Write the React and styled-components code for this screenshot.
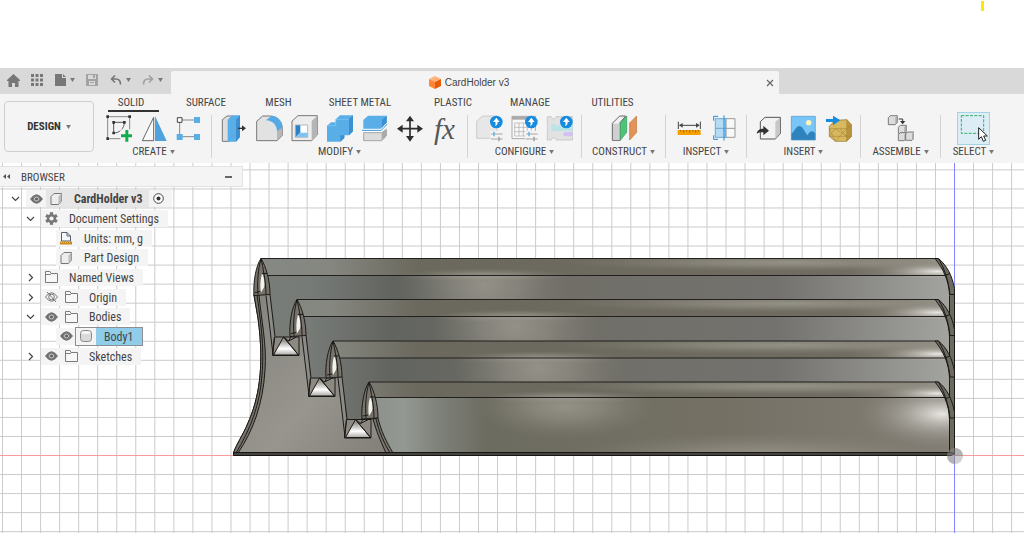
import React from "react";
import styled, { createGlobalStyle } from "styled-components";

const GlobalStyle = createGlobalStyle`
  * {
    box-sizing: border-box;
  }
  body {
    margin: 0;
    background: #fff;
    color: #444;
    font-family: "Roboto Condensed", Roboto, sans-serif;
    font-size: 11px;
  }
  button {
    border: 0;
    padding: 0;
    background: none;
    color: inherit;
    font: inherit;
  }
  svg {
    display: block;
  }
`;

//layout

const Page = styled.div`
  min-height: 100vh;
  display: flex;
  flex-direction: column;
`;

const TopSpace = styled.div`
  height: 68px;
  display: flex;
  justify-content: flex-end;
  padding: 1px 40px 0 0;
`;

const Mark = styled.div`
  width: 3px;
  height: 10px;
  background: #ffe900;
`;

const TitleBar = styled.header`
  height: 26px;
  display: flex;
  align-items: flex-end;
  background: #d9d9d9;
`;

const QuickAccess = styled.div`
  width: 171px;
  height: 26px;
  display: flex;
  align-items: flex-start;
`;

const QuickButton = styled.button`
  width: ${(props) => props.$width}px;
  height: 24px;
  display: flex;
  align-items: center;
  justify-content: center;
  gap: 4px;
  color: ${(props) => (props.$faded ? "#a2a2a2" : "#777")};
`;

const FileTab = styled.div`
  flex: 0 1 608px;
  height: 23px;
  display: flex;
  align-items: center;
  border-radius: 3px 3px 0 0;
  background: #f4f4f4;
`;

const FileName = styled.span`
  flex: 1;
  display: flex;
  align-items: center;
  justify-content: center;
  gap: 4px;
  padding-left: 6px;
  font-family: "Liberation Sans", sans-serif;
  font-size: 10px;
`;

const CloseButton = styled.button`
  width: 18px;
  height: 18px;
  display: flex;
  align-items: center;
  justify-content: center;
`;

const Ribbon = styled.div`
  height: 69px;
  display: flex;
  background: #f4f4f4;
`;

const DesignButton = styled.button`
  width: 90px;
  height: 51px;
  margin: 7px 2px 0 4px;
  display: flex;
  align-items: center;
  justify-content: center;
  gap: 5px;
  border: 1px solid #cfcfcf;
  border-radius: 4px;
  color: #333;
  font-weight: bold;
`;

const RibbonMain = styled.div`
  flex: 1;
`;

const TabList = styled.nav`
  height: 21px;
  display: flex;
  padding-left: 12px;
`;

const TabButton = styled.button`
  width: ${(props) => props.$width}px;
  height: 18px;
  padding: 1px ${(props) => (props.$active ? 5 : 0)}px 0 0;
  border-bottom: 2px solid ${(props) => (props.$active ? "#333" : "transparent")};
  line-height: 15px;
  white-space: nowrap;
`;

const Groups = styled.div`
  display: flex;
`;

const Group = styled.section`
  width: ${(props) => props.$width}px;
  height: 43px;
  border-right: ${(props) => (props.$last ? "0" : "1px solid #d3d3d3")};
  display: flex;
  flex-direction: column;
  align-items: center;
`;

const Tools = styled.div`
  height: 27px;
  display: flex;
  align-items: center;
  gap: 8px;
`;

const ToolButton = styled.button`
  width: 27px;
  height: 27px;
`;

const SelectButton = styled.button`
  width: 33px;
  height: 33px;
  border: 1px solid #a5d3e6;
  background: #dcedf5;
`;

const FxLabel = styled.span`
  display: block;
  color: #555;
  font-family: "Liberation Serif", serif;
  font-size: 29px;
  font-style: italic;
  line-height: 24px;
`;

const GroupLabel = styled.button`
  height: 16px;
  margin-top: 3px;
  display: flex;
  align-items: center;
  gap: 3px;
  white-space: nowrap;
`;

const Workspace = styled.main`
  position: relative;
  flex: 1;
  min-height: 370px;
  display: flex;
  flex-direction: column;
`;

const Canvas = styled.svg`
  flex: 1;
  width: 100%;
  min-height: 370px;
`;

const BrowserPanel = styled.aside`
  position: absolute;
  left: 0;
  top: 3px;
  width: 243px;
`;

const BrowserHeader = styled.div`
  height: 21px;
  display: flex;
  align-items: center;
  padding: 0 10px 0 3px;
  border: 1px solid #e2e2e2;
  border-left: 0;
  background: #f4f4f4;
`;

const BrowserTitle = styled.span`
  flex: 1;
  padding: 1px 0 0 11px;
`;

const Tree = styled.div`
  height: 177px;
  margin-top: 2px;
  display: grid;
  grid-template-rows: repeat(9, 1fr);
`;

const TreeRow = styled.div`
  display: flex;
  align-items: center;
  padding-left: ${(props) => 5 + props.$level * 15}px;
`;

const ChevronButton = styled.button`
  width: 21px;
  height: 17px;
  display: flex;
  align-items: center;
  justify-content: center;
`;

const Pill = styled.div`
  height: 17px;
  display: flex;
  align-items: center;
  padding-right: ${(props) => (props.$selected ? 0 : 3)}px;
  background: #f4f4f4;
`;

const Slot = styled.span`
  width: 20px;
  height: 17px;
  display: flex;
  align-items: center;
  justify-content: center;
`;

const Item = styled.button`
  height: 17px;
  display: flex;
  align-items: center;
  font-weight: ${(props) => (props.$bold ? "bold" : "normal")};
  background: ${(props) => (props.$bold ? "#e6e6e6" : "none")};
  outline: ${(props) => (props.$selected ? "1px solid #8b8f92" : "0")};
`;

const ItemText = styled.span`
  height: 17px;
  line-height: 18px;
  padding: 0 ${(props) => (props.$selected ? 9 : 6)}px 0 8px;
  font-size: 12px;
  white-space: nowrap;
  background: ${(props) => (props.$selected ? "#8fcdea" : "none")};
`;

//small icons

const Caret = ({ size = 5 }) => (
  <svg width={size} height={size - 1} viewBox="0 0 6 5">
    <path d="M0 0h6L3 5z" fill="#777" />
  </svg>
);

const Home = () => (
  <svg width="13" height="13" viewBox="0 0 13 13">
    <path d="M6.500 0L13 6v1h-1.500v6H8V9H5v4H1.500V7H0V6z" fill="currentColor" />
  </svg>
);

const Apps = () => (
  <svg width="12" height="12" viewBox="0 0 12 12" fill="currentColor">
    {[0, 1, 2].map((x) =>
      [0, 1, 2].map((y) => (
        <rect key={`${x}${y}`} x={x * 4.5} y={y * 4.5} width="3" height="3" />
      ))
    )}
  </svg>
);

const FileIcon = () => (
  <svg width="11" height="12" viewBox="0 0 11 12">
    <path d="M0 0h7v4h4v8H0zM8 0l3 3H8z" fill="currentColor" />
  </svg>
);

const Save = () => (
  <svg width="12" height="12" viewBox="0 0 12 12">
    <path
      d="M0 0h12v12H0zM2 1v4h8V1zM3 7v4h6V7z"
      fill="currentColor"
      fillRule="evenodd"
    />
    <path d="M7 1h2v3H7zM4 8h4v1H4z" fill="currentColor" />
  </svg>
);

const Undo = ({ flip }) => (
  <svg width="12" height="10" viewBox="0 0 12 10">
    <g
      transform={flip ? "translate(12 0) scale(-1 1)" : undefined}
      fill="none"
      stroke="currentColor"
      strokeWidth="1.600"
    >
      <path d="M5 .500L1.500 4 5 7.500M1.500 4H6c3 0 4.500 1.500 4.500 5.500" />
    </g>
  </svg>
);

const Cube = () => (
  <svg width="12" height="13" viewBox="0 0 12 13">
    <path d="M6 0l6 3-6 3-6-3z" fill="#ffb27a" />
    <path d="M0 3l6 3v7l-6-3z" fill="#ff8433" />
    <path d="M12 3L6 6v7l6-3z" fill="#e65c0a" />
  </svg>
);

const Close = () => (
  <svg width="8" height="8" viewBox="0 0 8 8">
    <path d="M1 1l6 6M7 1L1 7" stroke="#666" strokeWidth="1.200" />
  </svg>
);

const Chevron = ({ open }) => (
  <svg width="9" height="9" viewBox="0 0 9 9" fill="none" stroke="#444" strokeWidth="1.200">
    <path d={open ? "M1 3l3.500 3.500L8 3" : "M3 1l3.500 3.500L3 8"} />
  </svg>
);

const Eye = ({ hidden }) => (
  <svg width="13" height="10" viewBox="0 0 13 10">
    <path
      d="M.500 5Q6.500-3.500 12.500 5 6.500 13.500.500 5z"
      fill={hidden ? "none" : "#6b6b6b"}
      stroke="#777"
    />
    <circle cx="6.500" cy="5" r="2.800" fill={hidden ? "none" : "#eee"} stroke="#777" />
    {hidden ? (
      <path d="M2 0l9 10" stroke="#777" />
    ) : (
      <circle cx="6.500" cy="5" r="1.700" fill="#666" />
    )}
  </svg>
);

const Folder = () => (
  <svg width="13" height="12" viewBox="0 0 13 12">
    <path d="M.500 11.500V.500h4.500l1 2h6.500v9zM.500 3.500h5l1-1" fill="#f7f7f7" stroke="#7b7b7b" />
  </svg>
);

const Box = () => (
  <svg width="12" height="12" viewBox="0 0 12 12">
    <path d="M1 3.500L4 .500h7.500V8l-3 3.500H1z" fill="#ececec" stroke="#777" />
    <path d="M8.500 3.500l3-3V8l-3 3.500z" fill="#bcbcbc" />
  </svg>
);

const Cylinder = () => (
  <svg width="12" height="12" viewBox="0 0 12 12">
    <rect x=".500" y=".500" width="11" height="11" rx="3" fill="#dadada" stroke="#888" />
    <ellipse cx="6" cy="2.500" rx="4.500" ry="1.500" fill="#f6f6f6" />
  </svg>
);

const Gear = () => (
  <svg width="13" height="13" viewBox="-6.500 -6.500 13 13">
    {[0, 60, 120].map((a) => (
      <rect
        key={a}
        x="-1.600"
        y="-6.300"
        width="3.200"
        height="12.600"
        fill="#777"
        transform={`rotate(${a})`}
      />
    ))}
    <circle r="4.600" fill="#777" />
    <circle r="2.100" fill="#f4f4f4" />
  </svg>
);

const Units = () => (
  <svg width="12" height="13" viewBox="0 0 12 13">
    <path d="M1.500 9V.500H7L10.500 4v5z" fill="#f5f7fb" stroke="#56606e" />
    <path d="M7 .500V4h3.500" fill="none" stroke="#56606e" />
    <rect y="9.500" width="12" height="3" fill="#c98a17" />
    <path d="M1 10.500h10" stroke="#f0bd4d" strokeDasharray="1 1" />
  </svg>
);

const Target = () => (
  <svg width="11" height="11" viewBox="0 0 11 11">
    <circle cx="5.500" cy="5.500" r="4.800" fill="#fff" stroke="#444" />
    <circle cx="5.500" cy="5.500" r="2" fill="#333" />
  </svg>
);

//toolbar icons, each on an 81 unit square

const ToolSvg = styled.svg`
  width: 27px;
  height: 27px;
`;

const CreateSketch = () => (
  <ToolSvg viewBox="315 153 81 81">
    <path d="M323 158h66v66h-66z" fill="none" stroke="#888" strokeWidth="3" />
    <path d="M341 175h32c0 18-14 32-32 32z" fill="none" stroke="#555" strokeWidth="3" />
    <path
      d="M319 154h8v8h-8zM385 154h8v8h-8zM319 220h8v8h-8zM337 171h8v8h-8zM369 171h8v8h-8zM337 203h8v8h-8z"
      fill="#333"
    />
    <path d="M361 196h35v38h-35z" fill="#f4f4f4" />
    <path d="M376 198h9v13h11v9h-11v13h-9v-13h-13v-9h13z" fill="#14ad4d" />
  </ToolSvg>
);

const Mirror = () => (
  <ToolSvg viewBox="420 153 81 81">
    <path d="M461 160v70h-34z" fill="#fafafa" stroke="#666" strokeWidth="3" />
    <path d="M465 156v75h35z" fill="#4fa3dd" />
  </ToolSvg>
);

const Pattern = () => (
  <ToolSvg viewBox="525 153 81 81">
    <path d="M539 168h52M539 168v50h52" fill="none" stroke="#888" strokeWidth="3" />
    <path d="M532 161h14v14h-14z" fill="#fff" stroke="#444" strokeWidth="3" />
    <path d="M582 159h18v18h-18zM530 210h18v18h-18zM582 210h18v18h-18z" fill="#5aaee8" />
  </ToolSvg>
);

const PressPull = () => (
  <ToolSvg viewBox="33 60 81 81">
    <path d="M37 74l14-11h18v65l-12 11H37z" fill="#dedede" stroke="#777" strokeWidth="3" />
    <path d="M53 74l14-13h23v65l-12 14H53z" fill="#5aaee8" />
    <path d="M78 74l12-13v65l-12 14z" fill="#3d8fcf" />
    <path d="M84 100h18" stroke="#333" strokeWidth="4" />
    <path d="M96 91l12 9-12 9z" fill="#333" />
  </ToolSvg>
);

const Fillet = () => (
  <ToolSvg viewBox="138 60 81 81">
    <path
      d="M140 137V79l18-16h21c22 0 38 15 38 39v20l-16 15z"
      fill="#e2e2e2"
      stroke="#777"
      strokeWidth="3"
    />
    <path d="M201 108l16-13v27l-16 15z" fill="#b7b7b7" />
    <path d="M168 76l17-14c20 2 31 16 32 36l-16 11c0-18-13-33-33-33z" fill="#55a9e4" />
  </ToolSvg>
);

const Shell = () => (
  <ToolSvg viewBox="243 60 81 81">
    <path d="M246 78l18-16h58v58l-17 17h-59z" fill="#ededed" stroke="#777" strokeWidth="3" />
    <path d="M305 78l17-16v58l-17 17z" fill="#b5b5b5" />
    <path d="M256 90h37v37h-37z" fill="#fff" stroke="#999" strokeWidth="2" />
    <path d="M257 91h14v22l-14 13z" fill="#2c82c4" />
    <path d="M271 113h22v13h-36z" fill="#7cc2f3" />
  </ToolSvg>
);

const Combine = () => (
  <ToolSvg viewBox="348 60 81 81">
    <path d="M351 92l12-10h14V73l13-12h39v48l-12 12h-14v8l-12 11h-40z" fill="#5aaee8" />
    <path d="M417 73l12-12v48l-12 12zM391 129v-8h12v8l-12 11z" fill="#3d8fcf" />
    <path d="M351 92h26V73h40" fill="none" stroke="#8bcaf4" strokeWidth="2" />
  </ToolSvg>
);

const Split = () => (
  <ToolSvg viewBox="453 60 81 81">
    <path d="M460 75l14-13h56v25l-14 14h-56z" fill="#5aaee8" />
    <path d="M516 75l14-13v25l-14 14z" fill="#3d8fcf" />
    <path d="M461 113h54l14-10v20l-14 14h-54z" fill="#dcdcdc" stroke="#888" strokeWidth="2" />
    <path d="M515 113l14-10v20l-14 14z" fill="#aaa" />
    <path d="M456 106h58l18-19" fill="none" stroke="#fff" strokeWidth="8" />
    <path d="M456 106h58l18-19" fill="none" stroke="#3094dc" strokeWidth="3" />
  </ToolSvg>
);

const Move = () => (
  <ToolSvg viewBox="558 60 81 81">
    <path d="M600 70v62M569 101h62" stroke="#2e2e2e" strokeWidth="5" />
    <path
      d="M600 62l12 17h-24zM600 140l12-17h-24zM561 101l17-12v24zM639 101l-17-12v24z"
      fill="#2e2e2e"
    />
  </ToolSvg>
);

const UploadBadge = ({ x }) => (
  <g transform={`translate(${x} 81)`}>
    <circle r="19" fill="#168ce0" />
    <path d="M0-13L10 0H4c0 8-3 11-8 12 3-5 2-8 1-12h-7z" fill="#fff" />
  </g>
);

const Sliders = ({ x }) => (
  <g transform={`translate(${x} 0)`}>
    <path d="M-2 108h42v33H-2z" fill="#f4f4f4" />
    <path d="M0 117h35M0 132h35" stroke="#a5a5a5" strokeWidth="3" />
    <path d="M9 110v14" stroke="#58aee9" strokeWidth="4" />
    <path d="M24 125v14" stroke="#999" strokeWidth="4" />
  </g>
);

const ConfigureModel = () => (
  <ToolSvg viewBox="33 60 81 81">
    <path d="M35 130V79l17-16h44v67z" fill="#e7e7e7" stroke="#bbb" strokeWidth="2" />
    <Sliders x={78} />
    <UploadBadge x={94} />
  </ToolSvg>
);

const ConfigureTable = () => (
  <ToolSvg viewBox="138 60 81 81">
    <path d="M141 64h70v67h-70z" fill="#f8f8f8" stroke="#aaa" strokeWidth="3" />
    <path d="M141 64h70v10h-70z" fill="#aaa" />
    <path
      d="M149 84h50v39h-50zM149 97h50M149 110h50M162 84v39M175 84v39M187 84v39"
      fill="none"
      stroke="#aaa"
      strokeWidth="2"
    />
    <Sliders x={183} />
    <UploadBadge x={199} />
  </ToolSvg>
);

const ConfigureRules = () => (
  <ToolSvg viewBox="243 60 81 81">
    <path
      d="M247 65h12c0 9 14 9 14 0h50v70h-50c0-8-14-8-14 0h-12z"
      fill="#e2e2e2"
      stroke="#bbb"
      strokeWidth="2"
    />
    <path d="M259 88h12c2 7 10 7 12 0h40v20h-64z" fill="#b9e5e8" />
    <rect x="295" y="111" width="28" height="13" rx="6" fill="#d3c1f1" />
    <UploadBadge x={304} />
  </ToolSvg>
);

const Construct = () => (
  <ToolSvg viewBox="435 60 81 81">
    <path d="M442 85l22-22h18l-17 20v53h-23z" fill="#f1f1f1" stroke="#666" strokeWidth="3" />
    <path d="M444 86h20v49h-20z" fill="#cfcfcf" />
    <path d="M466 84l19-21v49l-19 24z" fill="#4cc577" stroke="#35905a" strokeWidth="2" />
    <path d="M494 84l21-21v49l-21 23z" fill="#e3935a" stroke="#bd7038" strokeWidth="2" />
  </ToolSvg>
);

const Measure = () => (
  <ToolSvg viewBox="630 60 81 81">
    <path d="M640 80v22M706 80v22M644 91h58" stroke="#444" strokeWidth="3" />
    <path d="M642 91l11-7v14zM704 91l-11-7v14z" fill="#444" />
    <path d="M638 105h69v15h-69z" fill="#f6a000" />
    <path
      d="M647 105v5M656 105v8M665 105v5M674 105v8M683 105v5M692 105v8M700 105v5"
      stroke="#775006"
      strokeWidth="2"
    />
  </ToolSvg>
);

const Section = () => (
  <ToolSvg viewBox="735 60 81 81">
    <path d="M783 71h27v56h-27zM783 100h27" fill="#f8f8f8" stroke="#999" strokeWidth="3" />
    <path d="M751 71h31v56h-31z" fill="#b6dbf4" stroke="#68a9d6" strokeWidth="3" />
    <path d="M751 100h31" stroke="#68a9d6" strokeWidth="3" />
    <path
      d="M746 77V64h13M746 121v12h13M777 61v76"
      fill="none"
      stroke="#168ce0"
      strokeWidth="3"
    />
  </ToolSvg>
);

const InsertDerive = () => (
  <ToolSvg viewBox="75 165 81 81">
    <path d="M91 185l14-13h46v49l-15 16H91z" fill="#f2f2f2" stroke="#555" strokeWidth="3" />
    <path d="M136 185l14-12v48l-14 15z" fill="#c7c7c7" />
    <path d="M80 221c2-11 9-15 20-15v-9l17 15-17 14v-9c-9 0-15 1-20 4z" fill="#333" />
  </ToolSvg>
);

const InsertImage = () => (
  <ToolSvg viewBox="180 165 81 81">
    <path d="M184 169h72v71h-72z" fill="#79c5f7" />
    <path
      d="M184 222c12-11 15-24 24-24s15 15 24 28c6-12 18-18 24-4v18h-72z"
      fill="#2e83bd"
    />
    <circle cx="236" cy="188" r="8" fill="#fff4bb" />
    <path d="M184 169h72v71h-72z" fill="none" stroke="#4796cc" strokeWidth="2" />
  </ToolSvg>
);

const InsertMesh = () => (
  <ToolSvg viewBox="285 165 81 81">
    <path
      d="M298 199l17-18 36-2 14 16v34l-15 15h-34l-18-15z"
      fill="#d9b95f"
      stroke="#8f7025"
      strokeWidth="2"
    />
    <path d="M351 179l14 16v34l-15 15z" fill="#b8943f" />
    <path
      d="M298 206h52v-27M350 206l15-11M298 206l18 38 34-38v38M298 229h52l-34-23-18 23M330 206l20 23 15 0"
      fill="none"
      stroke="#a07f30"
      strokeWidth="1.500"
    />
    <path d="M288 177h21v-10l22 14-22 15v-10h-21z" fill="#168ce0" />
  </ToolSvg>
);

const Assemble = () => (
  <ToolSvg viewBox="471 165 81 81">
    {[
      [475, 167, 27],
      [505, 196, 24],
      [505, 218, 24],
      [527, 216, 25],
    ].map(([x, y, s]) => (
      <g key={`${x}-${y}`} transform={`translate(${x} ${y})`}>
        <path
          d={`M0 6L6 0H${s}V${s - 6}L${s - 6} ${s}H0z`}
          fill="#dcdcdc"
          stroke="#666"
          strokeWidth="2.500"
        />
        <path d={`M${s - 6} 6L${s} 0V${s - 6}L${s - 6} ${s}z`} fill="#aaa" />
      </g>
    ))}
    <path d="M506 177h12v10" fill="none" stroke="#333" strokeWidth="3" />
    <path d="M510 183h16l-8 10z" fill="#333" />
  </ToolSvg>
);

const Select = () => (
  <svg width="31" height="31" viewBox="684 159 93 93">
    <path
      d="M694 167h67v53h-67z"
      fill="none"
      stroke="#32b067"
      strokeWidth="3"
      strokeDasharray="9 4"
    />
    <path
      d="M746 203v35l8-8 6 14 7-3-6-13h11z"
      fill="#fff"
      stroke="#222"
      strokeWidth="3"
    />
  </svg>
);

//model

const GRID = 19.04;
const ORIGIN = { x: 954.5, y: 455.5 };

// top of a rib, its crease, the bottom of its shaded side, and where it starts
const ribs = [
  { x: 261, top: 258.5, crease: 275.5, bottom: 337, shine: 485 },
  { x: 297, top: 299.5, crease: 316.5, bottom: 378, shine: 515 },
  { x: 333, top: 341, crease: 358, bottom: 419.5, shine: 538 },
  { x: 369, top: 382, crease: 397.5, bottom: 453, shine: 565 },
];

const Grid = () => {
  const columns = [];
  const rows = [];
  for (let i = -60; i < 30; i++) if (i) columns.push(ORIGIN.x + i * GRID);
  for (let i = -30; i < 30; i++) if (i) rows.push(ORIGIN.y + i * GRID);
  return (
    <g stroke="#cbcbcb">
      {columns.map((x) => (
        <path key={x} d={`M${x} -200V900`} />
      ))}
      {rows.map((y) => (
        <path key={y} d={`M-300 ${y}H1500`} />
      ))}
    </g>
  );
};

const Rib = ({ rib, last }) => {
  const { x, top, crease, bottom, shine } = rib;
  const side = last
    ? `M${x} ${top}H935C943 ${top + 10} 949 ${top + 22} 949 ${top + 37}V454H393Q380 438 ${x + 9} ${top + 36}Q${x + 7} ${top + 10} ${x} ${top}z`
    : `M${x} ${top}H935C943 ${top + 10} 949 ${top + 22} 949 ${top + 37}V${bottom + 8}H${x + 13}L${x + 9} ${top + 36}Q${x + 7} ${top + 12} ${x} ${top}z`;
  const clip = `rib-${x}`;
  return (
    <g>
      <clipPath id={clip}>
        <path d={side} />
      </clipPath>
      <g clipPath={`url(#${clip})`}>
        <rect x={x} y={top} width="700" height={bottom - top + 9} fill={last ? "url(#front)" : "url(#under)"} />
        <ellipse cx={shine} cy={crease + 9} rx={last ? 90 : 85} ry={last ? 32 : 70} fill="url(#glow)" />
        {last && <ellipse cx="942" cy="414" rx="85" ry="34" fill="url(#white)" />}
        {last && <ellipse cx="760" cy="458" rx="190" ry="26" fill="url(#glow)" />}
        <rect x={x} y={top} width="700" height={crease - top} fill="url(#crown)" />
        <ellipse cx={shine} cy={crease} rx="85" ry="7" fill="url(#glow)" />
        <ellipse cx="790" cy={top + 4} rx="230" ry="9" fill="url(#glow)" />
        <ellipse cx="937" cy={crease - 4} rx="60" ry="9" fill="url(#white)" />
      </g>
      <path d={`M${x} ${top}H938M${x + 6} ${crease}H946`} stroke="#22211f" />
    </g>
  );
};

const RibEnd = ({ top }) => (
  <g stroke="#1b1a18" fill="#6c695f">
    <path
      d={`M935 ${top}H938.500C947 ${top + 7} 952 ${top + 17} 954.500 ${top + 30}V454H949.500V${top + 37}C949 ${top + 22} 943 ${top + 10} 935 ${top}z`}
    />
    <path d={`M938.500 ${top}Q948 ${top + 16} 950 ${top + 36}M945 ${top + 17}l5-2M949 ${top + 36}h5`} fill="none" />
  </g>
);

const Tip = ({ rib, last }) => (
  <g transform={`translate(${rib.x} ${rib.top})`} stroke="#1b1a18" strokeWidth="1">
    <path d="M0 0C-5 7-8 24-7 37L9 36C9 22 5 8 0 0z" fill="#77736a" />
    <path d="M1 15C-1 22-1 29 0 34L3 29C4 24 3 18 1 15z" fill="#f2f2ee" stroke="none" />
    <path d="M0 0C-3 12-4 23-3 36M0 0C2 10 5 23 5 36M-6 34l5-1M1 15h5" fill="none" />
    {!last && <path d="M5 37L12 96M9 36L14 78" fill="none" />}
  </g>
);

const Foot = ({ x, y }) => (
  <g transform={`translate(${x} ${y})`} stroke="#1b1a18">
    <path d="M2 0H26.500V18.500H0z" fill="#8d8981" />
    <path d="M1 18L11 0 26 18z" fill="url(#footShine)" />
    <path d="M11 0L26 18M2 0L0 18M11 0l5 4 8-4M16 4l3-5" fill="none" />
  </g>
);

const Model = () => (
  <Canvas viewBox="0 163 1024 370" preserveAspectRatio="xMidYMid slice" role="img">
    <defs>
      <linearGradient id="face" x1="0" y1="0" x2="1" y2="1">
        <stop offset="0" stopColor="#7f7e7a" />
        <stop offset=".600" stopColor="#98958e" />
        <stop offset="1" stopColor="#817e78" />
      </linearGradient>
      <linearGradient id="under" gradientUnits="userSpaceOnUse" x1="261" y1="0" x2="950" y2="0">
        <stop offset="0" stopColor="#777d78" />
        <stop offset=".070" stopColor="#777b77" />
        <stop offset=".190" stopColor="#62645f" />
        <stop offset=".450" stopColor="#706e67" />
        <stop offset=".750" stopColor="#73726e" />
        <stop offset="1" stopColor="#a3a3a0" />
      </linearGradient>
      <linearGradient id="front" gradientUnits="userSpaceOnUse" x1="369" y1="0" x2="950" y2="0">
        <stop offset="0" stopColor="#8b908a" />
        <stop offset=".060" stopColor="#939992" />
        <stop offset=".120" stopColor="#7e8179" />
        <stop offset=".200" stopColor="#6d6c61" />
        <stop offset=".600" stopColor="#747064" />
        <stop offset="1" stopColor="#827e75" />
      </linearGradient>
      <linearGradient id="crown" gradientUnits="userSpaceOnUse" x1="261" y1="0" x2="950" y2="0">
        <stop offset="0" stopColor="#858984" />
        <stop offset=".100" stopColor="#858780" />
        <stop offset=".230" stopColor="#6b685d" />
        <stop offset=".850" stopColor="#706c61" />
        <stop offset="1" stopColor="#99958b" />
      </linearGradient>
      <radialGradient id="glow">
        <stop offset="0" stopColor="#9d9a91" stopOpacity=".800" />
        <stop offset=".400" stopColor="#98958b" stopOpacity=".550" />
        <stop offset="1" stopColor="#858278" stopOpacity="0" />
      </radialGradient>
      <radialGradient id="white">
        <stop offset="0" stopColor="#eeece8" stopOpacity=".950" />
        <stop offset=".500" stopColor="#b9b6b0" stopOpacity=".500" />
        <stop offset="1" stopColor="#8d8a82" stopOpacity="0" />
      </radialGradient>
      <linearGradient id="footShine" x1="0" y1="0" x2="0" y2="1">
        <stop offset=".200" stopColor="#98958f" />
        <stop offset=".650" stopColor="#fff" />
        <stop offset="1" stopColor="#aaa8a2" />
      </linearGradient>
    </defs>
    <Grid />
    <path d="M-300 455.500H1500" stroke="#f79a9a" />
    <path d="M954.500 -200V900" stroke="#8585ff" />
    <path
      d="M254 295L258 318C265 370 258 400 248 423 243 435 236 445 233.500 453V455H393L378 418V382L261 260z"
      fill="url(#face)"
      stroke="#1b1a18"
    />
    <path
      d="M254 295L258 318C265 370 258 400 248 423 243 435 236 445 233.500 453H238C253 431 263 404 265 370 267 345 261 318 259 295z"
      fill="#79756c"
      stroke="#1b1a18"
    />
    <path d="M257 295C262 330 264 350 262 375 260 405 250 430 236 453" fill="none" stroke="#1b1a18" />
    {ribs.map((rib, i) => (
      <g key={rib.x}>
        <Rib rib={rib} last={i === 3} />
        {i < 3 && (
          <path
            d={`M${rib.x + 5} ${rib.top + 37}L${rib.x + 12} ${rib.top + 97}H${rib.x + 44}L${rib.x + 41} ${rib.top + 79}H${rib.x + 13}L${rib.x + 9} ${rib.top + 36}z`}
            fill="#8d8b86"
          />
        )}
      </g>
    ))}
    {ribs.slice(0, 3).map((rib) => (
      <Foot key={rib.x} x={rib.x + 11.5} y={rib.top + 78.5} />
    ))}
    {ribs.map((rib, i) => (
      <Tip key={rib.x} rib={rib} last={i === 3} />
    ))}
    <path
      d="M373 419L378 418C381 431 386 441 393 453H386C380 440 376 430 373 419z"
      fill="#79756c"
      stroke="#1b1a18"
    />
    <path d="M376 419C379 432 384 443 390 453" fill="none" stroke="#1b1a18" />
    {ribs.map((rib) => (
      <RibEnd key={rib.x} top={rib.top} />
    ))}
    <path d="M233.500 452.500H953l1 1-2 2H233.500z" fill="#45433d" stroke="#181715" />
    <circle cx="955" cy="456" r="8" fill="#999" fillOpacity=".450" />
    <path d="M955 456V448A8 8 0 0 1 963 456zM955 456V464A8 8 0 0 1 947 456z" fill="#888" fillOpacity=".400" />
  </Canvas>
);

//data

const tabs = [
  ["SOLID", 51],
  ["SURFACE", 94],
  ["MESH", 51],
  ["SHEET METAL", 112],
  ["PLASTIC", 74],
  ["MANAGE", 80],
  ["UTILITIES", 85],
];

const Parameters = () => <FxLabel>fx</FxLabel>;

const groups = [
  { label: "CREATE", width: 116, icons: [CreateSketch, Mirror, Pattern] },
  {
    label: "MODIFY",
    width: 256,
    icons: [PressPull, Fillet, Shell, Combine, Split, Move, Parameters],
  },
  {
    label: "CONFIGURE",
    width: 114,
    icons: [ConfigureModel, ConfigureTable, ConfigureRules],
  },
  { label: "CONSTRUCT", width: 84, icons: [Construct] },
  { label: "INSPECT", width: 81, icons: [Measure, Section] },
  { label: "INSERT", width: 114, icons: [InsertDerive, InsertImage, InsertMesh] },
  { label: "ASSEMBLE", width: 80, icons: [Assemble] },
];

const nodes = [
  { text: "CardHolder v3", level: 0, open: true, eye: "on", icon: Box, bold: true },
  { text: "Document Settings", level: 1, open: true, icon: Gear },
  { text: "Units: mm, g", level: 2, icon: Units },
  { text: "Part Design", level: 2, icon: Box },
  { text: "Named Views", level: 1, open: false, icon: Folder },
  { text: "Origin", level: 1, open: false, eye: "off", icon: Folder },
  { text: "Bodies", level: 1, open: true, eye: "on", icon: Folder },
  { text: "Body1", level: 2, eye: "on", icon: Cylinder, selected: true },
  { text: "Sketches", level: 1, open: false, eye: "on", icon: Folder },
];

const Node = ({ node }) => {
  const Icon = node.icon;
  return (
    <TreeRow $level={node.level}>
      <ChevronButton as={node.open === undefined ? "span" : "button"} aria-label="Toggle">
        {node.open !== undefined && <Chevron open={node.open} />}
      </ChevronButton>
      <Pill $selected={node.selected}>
        {node.eye && (
          <Slot>
            <Eye hidden={node.eye === "off"} />
          </Slot>
        )}
        <Item $bold={node.bold} $selected={node.selected}>
          <Slot>
            <Icon />
          </Slot>
          <ItemText $selected={node.selected}>{node.text}</ItemText>
        </Item>
        {node.bold && (
          <Slot>
            <Target />
          </Slot>
        )}
      </Pill>
    </TreeRow>
  );
};

const App = () => {
  return (
    <>
      <GlobalStyle />
      <Page>
        <TopSpace>
          <Mark />
        </TopSpace>
        <TitleBar>
          <QuickAccess>
            <QuickButton $width={27} aria-label="Home">
              <Home />
            </QuickButton>
            <QuickButton $width={20} aria-label="Data panel">
              <Apps />
            </QuickButton>
            <QuickButton $width={35} aria-label="File">
              <FileIcon />
              <Caret />
            </QuickButton>
            <QuickButton $width={20} $faded aria-label="Save">
              <Save />
            </QuickButton>
            <QuickButton $width={36} aria-label="Undo">
              <Undo />
              <Caret />
            </QuickButton>
            <QuickButton $width={29} $faded aria-label="Redo">
              <Undo flip />
              <Caret />
            </QuickButton>
          </QuickAccess>
          <FileTab>
            <FileName>
              <Cube />
              CardHolder v3
            </FileName>
            <CloseButton aria-label="Close">
              <Close />
            </CloseButton>
          </FileTab>
        </TitleBar>
        <Ribbon>
          <DesignButton>
            DESIGN
            <Caret />
          </DesignButton>
          <RibbonMain>
            <TabList>
              {tabs.map(([name, width], i) => (
                <TabButton key={name} $width={width} $active={i === 0}>
                  {name}
                </TabButton>
              ))}
            </TabList>
            <Groups>
              {groups.map((group) => (
                <Group key={group.label} $width={group.width}>
                  <Tools>
                    {group.icons.map((Icon) => (
                      <ToolButton key={Icon.name} aria-label={Icon.name}>
                        <Icon />
                      </ToolButton>
                    ))}
                  </Tools>
                  <GroupLabel>
                    {group.label}
                    <Caret />
                  </GroupLabel>
                </Group>
              ))}
              <Group $width={65} $last>
                <Tools>
                  <SelectButton aria-label="Select">
                    <Select />
                  </SelectButton>
                </Tools>
                <GroupLabel>
                  SELECT
                  <Caret />
                </GroupLabel>
              </Group>
            </Groups>
          </RibbonMain>
        </Ribbon>
        <Workspace>
          <Model />
          <BrowserPanel>
            <BrowserHeader>
              <svg width="7" height="5" viewBox="0 0 7 5">
                <path d="M3 0v5L0 2.500zM7 0v5L4 2.500z" fill="#555" />
              </svg>
              <BrowserTitle>BROWSER</BrowserTitle>
              <svg width="7" height="2" viewBox="0 0 7 2">
                <path d="M0 0h7v2H0z" fill="#666" />
              </svg>
            </BrowserHeader>
            <Tree>
              {nodes.map((node) => (
                <Node key={node.text} node={node} />
              ))}
            </Tree>
          </BrowserPanel>
        </Workspace>
      </Page>
    </>
  );
};

export default App;
